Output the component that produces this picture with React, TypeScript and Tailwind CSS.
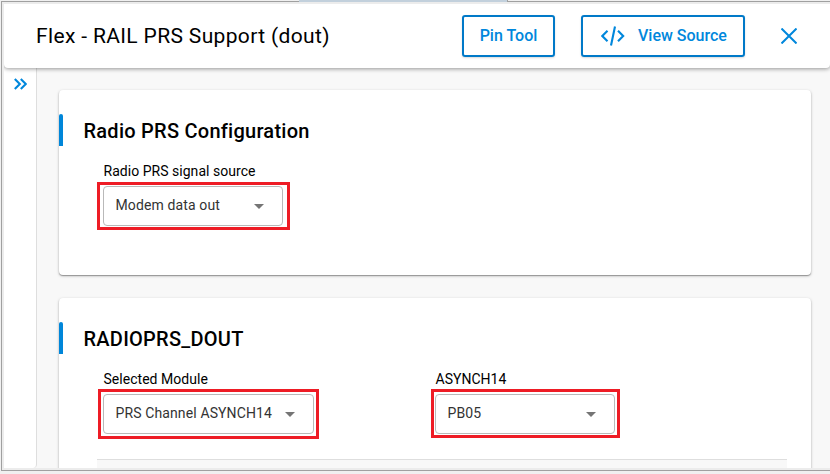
import React from "react";

type SelectProps = {
  label: string;
  value: string;
  width: string;
  highlight: string;
};

function Select({ label, value, width, highlight }: SelectProps) {
  return (
    <div className="w-[332px] pl-1.5">
      <div className="h-5 pl-[0.5px] text-sm leading-5 tracking-[0.03px] text-black">{label}</div>
      <div
        className={`relative mt-[5px] flex h-10 items-center justify-between rounded border border-[#b9b9b9] bg-white pr-[18px] pl-[11.5px] ${width}`}
      >
        <span className="pb-[3px] text-sm leading-5 tracking-[0.12px] text-[#333]">{value}</span>
        <svg width="10" height="5" viewBox="0 0 10 5" className="block">
          <path d="M0 0h10L5 5z" fill="#757575" />
        </svg>
        <div className={`pointer-events-none absolute border-[3px] border-[#ee1c25] ${highlight}`} />
      </div>
    </div>
  );
}

function CardTitle({ children }: { children: React.ReactNode }) {
  return (
    <div className="flex h-8 items-center">
      <div className="h-8 w-1 rounded-t-sm bg-[#0086d9]" />
      <h2 className="pt-px pl-[20.5px] text-xl font-medium leading-7 tracking-[0.25px] text-black">{children}</h2>
    </div>
  );
}

const cardShadow = "shadow-[0_1px_3px_rgba(0,0,0,0.25),0_1px_1px_rgba(0,0,0,0.28)]";

export default function App() {
  return (
    <div className="flex h-[474px] w-[830px] flex-col overflow-hidden bg-[#f0f0f0] font-[Roboto,sans-serif]">
      <div className="flex h-0.5 shrink-0">
        <div className="ml-px w-[298px] border-b border-[#a0a0a0]" />
        <div className="w-[208px] bg-[#c2d0dc]" />
        <div className="flex-1 border-b border-l border-[#a0a0a0]" />
      </div>
      <div className="ml-px flex h-[469px] shrink-0 flex-col border-b border-l border-[#a0a0a0] bg-[#ececec] pt-0.5 pb-0.5 pl-0.5">
        <div className="flex min-h-0 flex-1 flex-col overflow-hidden bg-[#f8f8f8]">
          <header className="z-10 flex h-16 shrink-0 items-center rounded-b bg-white pl-8 shadow-[0_1px_4px_rgba(0,0,0,0.4)]">
            <h1 className="w-[426px] text-[21px] leading-7 tracking-[0.35px] text-black">Flex - RAIL PRS Support (dout)</h1>
            <button className="h-[42px] w-[93px] rounded-[3px] border-2 border-[#0079c8] text-base font-medium text-[#0087dc] shadow-[0_1px_2px_rgba(0,0,0,0.15)]">
              Pin Tool
            </button>
            <button className="ml-[26px] flex h-[42px] w-[164px] items-center rounded-[3px] border-2 border-[#0079c8] pl-[18px] text-base font-medium text-[#0087dc] shadow-[0_1px_2px_rgba(0,0,0,0.15)]">
              <svg width="24" height="20" viewBox="0 0 24 20" fill="none" stroke="#0087dc" strokeWidth="2.1">
                <path d="M6.5 4.7 1.3 10l5.2 5.3M17 4.7l5.2 5.3-5.2 5.3M14 .5 10 19.5" />
              </svg>
              <span className="ml-[13px]">View Source</span>
            </button>
            <button className="ml-9" aria-label="Close">
              <svg width="16" height="16" viewBox="0 0 16 16" fill="none" stroke="#0087dc" strokeWidth="2">
                <path d="m.5.5 15 15m0-15-15 15" />
              </svg>
            </button>
          </header>
          <div className="flex min-h-0 flex-1">
            <aside className="w-[33px] shrink-0 rounded-br border-r border-[#dedede] bg-white pt-2.5 pl-2.5">
              <svg width="13" height="12" viewBox="0 0 13 12" fill="none" stroke="#0087dc" strokeWidth="2.1">
                <path d="M.8 1l5 5-5 5M6.8 1l5 5-5 5" />
              </svg>
            </aside>
            <main className="min-w-0 flex-1 overflow-hidden pt-[22px] pl-[22px]">
              <section className={`h-[185px] w-[752px] rounded bg-white pt-6 ${cardShadow}`}>
                <CardTitle>Radio PRS Configuration</CardTitle>
                <div className="pt-[15px] pl-[38px]">
                  <Select
                    label="Radio PRS signal source"
                    value="Modem data out"
                    width="w-[180px]"
                    highlight="-top-[5px] -left-[7px] h-12 w-[193px]"
                  />
                </div>
              </section>
              <section className={`mt-[23px] h-[200px] w-[752px] rounded bg-white pt-6 ${cardShadow}`}>
                <CardTitle>RADIOPRS_DOUT</CardTitle>
                <div className="flex pt-[15px] pl-[38px]">
                  <Select
                    label="Selected Module"
                    value="PRS Channel ASYNCH14"
                    width="w-[211px]"
                    highlight="-top-[6px] -left-[6px] h-[50px] w-[221px]"
                  />
                  <Select
                    label="ASYNCH14"
                    value="PB05"
                    width="w-[180px]"
                    highlight="-top-[6px] -left-[5px] h-[49px] w-[189px]"
                  />
                </div>
                <div className="mt-[25px] ml-[38px] h-20 w-[690px] border-t border-[#dedede] bg-[#f8f8f8]" />
              </section>
            </main>
          </div>
        </div>
      </div>
    </div>
  );
}
